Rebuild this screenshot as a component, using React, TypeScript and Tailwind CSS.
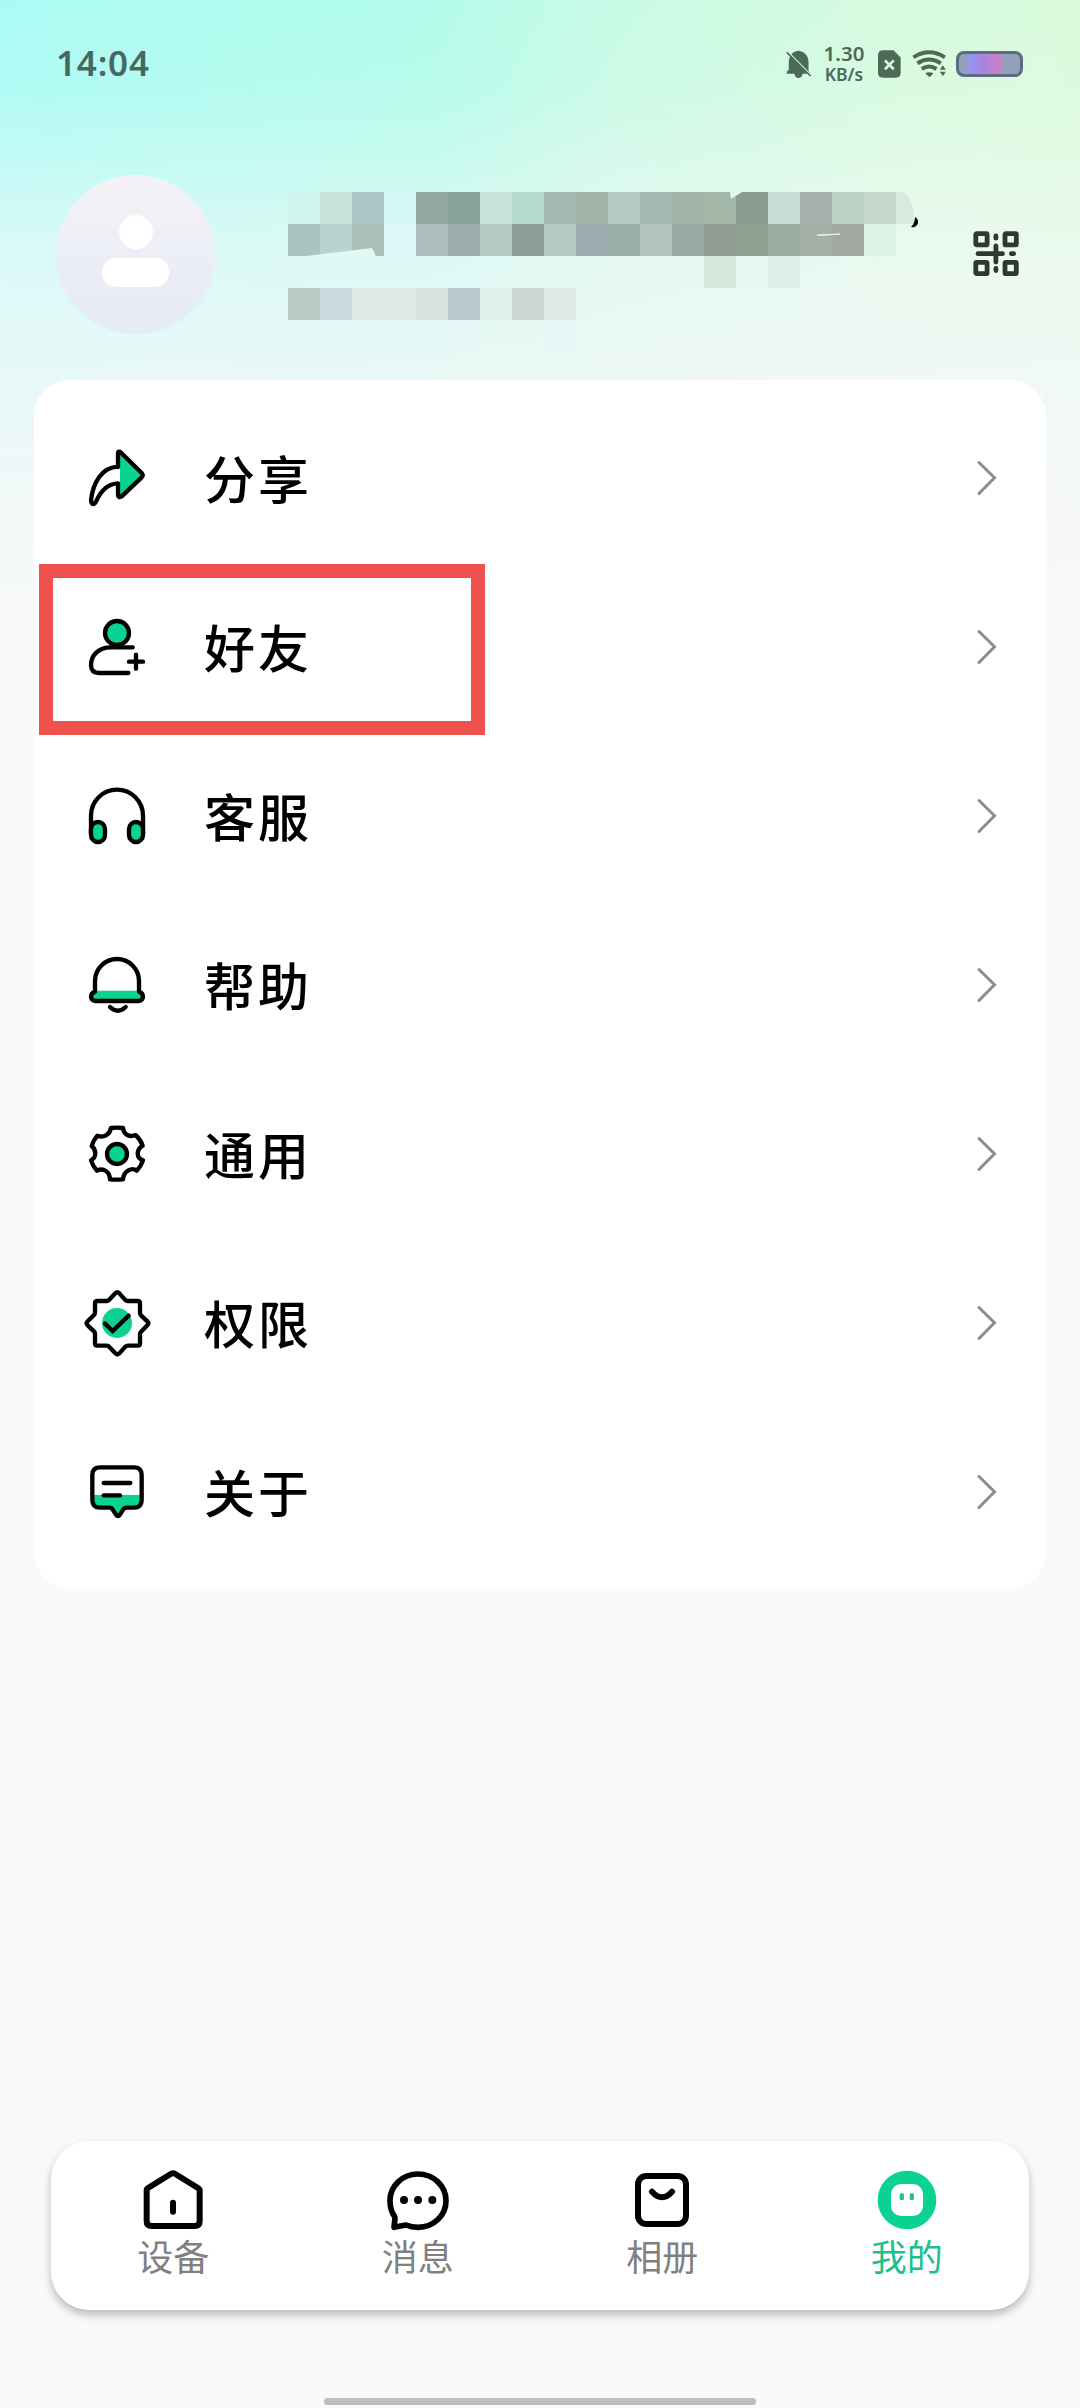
import type { ReactNode } from "react";

const GREEN = "#0ad293";

// Obscured name and account rows: one entry per 32px cell, "" is empty.
const MOSAIC: string[][] = [
  ["#cff5ed", "#c6e3dc", "#abc6c9", "#d3f8f6", "#92aaa3", "#8ba499", "#c6e3dc", "#b4dbcd", "#a4b8b4", "#a4b4a8", "#b4cbc5", "#a4b8b4", "#a4b4a8", "#a4b8aa", "#8a9d92", "#c6ded6", "#a4b0ac", "#bcd2c5", "#c6d8cc", ""],
  ["#abc4c1", "#b8d3cf", "#acc0ba", "#dcf7f6", "#adbdbb", "#9badac", "#b4cbc5", "#8a9d99", "#b4cbc5", "#9badae", "#9bb0aa", "#b4c3bb", "#9ba9a3", "#939c92", "#90a08f", "#9bada3", "#a4aea4", "#a3aaa1", "#ddf3e6", ""],
  ["", "", "", "", "", "", "", "", "", "", "", "", "", "#d5e8dd", "", "#ddeee6", "", "", "", ""],
  ["#b9c9c4", "#cbd8df", "#dde9e4", "#dde9e4", "#d6e2de", "#bac8cd", "#dff0ed", "#ccd5d3", "#dee9e5", "", "", "", "", "", "", "", "", "", "", ""],
  ["", "", "", "", "", "#e6f5f6", "", "", "#e6f5f6", "", "", "", "", "", "", "", "", "", "", ""],
];

function Icon({ box, size, w, children }: { box: string; size: number; w: number; children: ReactNode }) {
  return (
    <svg viewBox={box} width={size} height={size} fill="none" stroke="#000" strokeWidth={w} strokeLinecap="round" strokeLinejoin="round" className="shrink-0">
      {children}
    </svg>
  );
}

const ROWS: { label: string; marked?: boolean; icon: ReactNode }[] = [
  {
    label: "分享",
    icon: (
      <Icon box="153 213 216 216" size={72} w={13}>
        <path d="M270 245 L338 313 L270 377 Z" fill={GREEN} stroke="none" />
        <path d="M264 288 V247 Q264 239 271 243 L335 306 Q341 313 335 319 L275 376 Q264 382 264 371 V337 C232 338 211 362 198 392 Q193 401 186 398 Q183 396 183 388 C189 334 216 289 264 287" />
      </Icon>
    ),
  },
  {
    label: "好友",
    marked: true,
    icon: (
      <Icon box="153 720 216 216" size={72} w={13}>
        <circle cx="261" cy="786" r="36" fill={GREEN} />
        <path d="M308 829 H242 C205 829 183 854 183 882 Q183 906 207 906 H295 M297 872 H339 M318 851 V893" />
      </Icon>
    ),
  },
  {
    label: "客服",
    icon: (
      <Icon box="63 117 216 216" size={72} w={13}>
        <path d="M93 278 V224 A78 78 0 0 1 249 224 V278" />
        <rect x="93" y="243" width="42" height="60" rx="21" fill={GREEN} />
        <rect x="207" y="243" width="42" height="60" rx="21" fill={GREEN} />
      </Icon>
    ),
  },
  {
    label: "帮助",
    icon: (
      <Icon box="63 624 216 216" size={72} w={13}>
        <path d="M106 749 H236 L249 766 L240 780 H102 L93 766 Z" fill={GREEN} stroke="none" />
        <path d="M105 752 V720 A66 66 0 0 1 237 720 V752 Q249 756 249 768 Q247 780 235 780 H107 Q95 780 93 768 Q93 756 105 752 Z M150 798 Q173 820 197 798" />
      </Icon>
    ),
  },
  {
    label: "通用",
    icon: (
      <Icon box="63 111 216 216" size={72} w={13}>
        <path d="M153 141 Q171 139 189 141 C191 158 204 168 220 164 Q227 161 228 163 Q242 176 248 194 C228 207 228 231 249 238 Q243 256 230 269 C216 258 191 269 189 295 Q171 297 150 295 C149 270 129 260 111 269 Q99 256 93 238 C110 229 110 207 95 195 Q100 177 112 164 C130 171 149 162 153 141 Z" />
        <circle cx="171" cy="219" r="30" fill={GREEN} />
      </Icon>
    ),
  },
  {
    label: "权限",
    icon: (
      <Icon box="63 618 216 216" size={72} w={13}>
        <circle cx="171" cy="726" r="45" fill={GREEN} stroke="none" />
        <path d="M166 637 Q172 631 178 637 L197 658 Q199 660 203 660 H233 Q240 660 240 667 V695 Q240 700 243 703 L262 721 Q268 727 262 733 L243 752 Q240 755 240 760 V787 Q240 794 233 794 H204 Q199 794 196 797 L178 817 Q172 823 166 817 L148 798 Q145 794 140 794 H112 Q105 794 105 787 V758 Q105 754 102 751 L83 733 Q77 727 83 721 L102 702 Q105 699 105 694 V667 Q105 660 112 660 H140 Q144 660 147 657 Z" />
        <path d="M135 728 L158 750 L206 704" strokeLinejoin="miter" />
      </Icon>
    ),
  },
  {
    label: "关于",
    icon: (
      <Icon box="63 225 216 216" size={72} w={13}>
        <path d="M99 342 H245 V360 Q242 380 222 380 H192 L174 405 L154 382 H120 Q98 380 98 360 Z" fill={GREEN} stroke="none" />
        <path d="M120 259 H222 Q245 259 245 282 V357 Q245 380 222 380 H199 Q194 380 191 383 L180 401 Q174 409 168 401 L158 386 Q155 380 149 380 H120 Q97 380 97 357 V282 Q97 259 120 259 Z M131 306 H211 M131 343 H180" />
      </Icon>
    ),
  },
];

const TABS: { label: string; active?: boolean; icon: ReactNode }[] = [
  {
    label: "设备",
    icon: (
      <Icon box="330 141 198 198" size={66} w={18}>
        <path d="M350 211 Q350 207 354 204 L422 162 Q429 158 436 162 L504 204 Q509 207 509 211 V303 Q509 318 494 318 H365 Q350 318 350 303 Z M429 248 V275" />
      </Icon>
    ),
  },
  {
    label: "消息",
    icon: (
      <Icon box="1062 141 198 198" size={66} w={17}>
        <path d="M1091 290 C1081 276 1077 260 1077 242 C1077 198 1114 162 1161 162 C1208 162 1245 198 1245 242 C1245 286 1208 322 1161 322 Q1142 322 1125 315 L1089 322 L1092 295 Z" />
        <g fill="#000" stroke="none">
          <circle cx="1119" cy="240" r="12" />
          <circle cx="1161" cy="240" r="12" />
          <circle cx="1204" cy="240" r="12" />
        </g>
      </Icon>
    ),
  },
  {
    label: "相册",
    icon: (
      <Icon box="264 141 198 198" size={66} w={18}>
        <rect x="291" y="168" width="144" height="144" rx="25" />
        <path d="M333 215 Q363 248 393 215" />
      </Icon>
    ),
  },
  {
    label: "我的",
    active: true,
    icon: (
      <Icon box="999 141 198 198" size={66} w={0}>
        <g stroke="none">
          <circle cx="1098" cy="240" r="88" fill={GREEN} />
          <rect x="1050" y="192" width="96" height="96" rx="30" fill="#fff" />
          <rect x="1076" y="219" width="13" height="22" rx="6.5" fill="#25bf90" />
          <rect x="1106" y="219" width="13" height="22" rx="6.5" fill="#25bf90" />
        </g>
      </Icon>
    ),
  },
];

function StatusBar() {
  return (
    <header className="flex h-32 items-center pr-[57px] pl-[56px] font-['Noto_Sans'] text-[#46695f]">
      <span className="mb-[3px] text-[35px] leading-none font-semibold tracking-[0.8px]">14:04</span>
      <div className="ml-auto flex items-center text-[#4c6a54]">
        <svg viewBox="78 58 78 88" width="26" height="29" className="mr-[12px]">
          <path d="M115 60 C134 62 146 77 146 94 V122 L151 130 H128 C127 147 105 147 103 130 H80 V125 L86 117 V92 C88 74 98 62 115 60 Z" fill="currentColor" />
          <path d="M76 58 L158 140" stroke="#d3f9e4" strokeWidth="7" />
          <path d="M80 65 L152 137" stroke="currentColor" strokeWidth="5" />
        </svg>
        <div className="mr-[14px] mb-[2px] flex w-[40px] flex-col items-center font-semibold whitespace-nowrap">
          <span className="text-[20.5px] leading-[21px]">1.30</span>
          <span className="text-[17.5px] leading-[20px]">KB/s</span>
        </div>
        <svg viewBox="354 60 70 84" width="23" height="28" className="mr-[11px]">
          <path d="M370 60 H401 L423 82 V129 Q423 144 408 144 H369 Q354 144 354 129 V76 Q354 60 370 60 Z" fill="currentColor" />
          <path d="M375 91 L402 118 M402 91 L375 118" stroke="#d5f9e2" strokeWidth="8" />
        </svg>
        <svg viewBox="455 62 104 84" width="35" height="28" className="mr-[9px]" fill="none" stroke="currentColor" strokeWidth="12">
          <path d="M459 84 Q506 54 553 84 M471 102 Q506 79 541 102 M484 119 Q506 104 528 119" />
          <path d="M494 132 Q506 125 519 132 L507 144 Z M538 121 L547 108 L556 121 Z M538 127 H556 L547 141 Z" fill="currentColor" stroke="none" />
        </svg>
        <div className="flex h-[26px] w-[67px] rounded-[8px] border-[3px] border-[#5b6c82] bg-[#92a1b9] pl-[8px]">
          <div className="h-full w-[34px] bg-linear-to-r from-[#8e9af0] via-[#a983dc] to-[#d07fc4]" />
        </div>
      </div>
    </header>
  );
}

function Profile() {
  return (
    <section className="flex h-[252px] items-start pr-[61px] pl-[56px]">
      <div className="mt-[47px] flex size-[159px] flex-col items-center rounded-full bg-linear-to-b from-[#f4f2f6] to-[#e5eaf5] pt-[40px]">
        <div className="size-[34px] rounded-full bg-white" />
        <div className="mt-[9px] h-[29px] w-[67px] rounded-[14px] bg-white" />
      </div>
      <div className="relative mt-16 ml-[73px] grid grid-cols-[repeat(20,32px)] grid-rows-[repeat(5,32px)]">
        {MOSAIC.flat().map((c, i) => (
          <div key={i} style={{ backgroundColor: c || undefined }} />
        ))}
        <svg viewBox="288 192 640 160" width="640" height="160" className="absolute inset-0">
          <path d="M896 192 H904 Q914 200 914 224 H896 Z" fill="#d8e9df" />
          <path d="M915 217 C919 219 919 224 916 226 Q914 228 911 227 Q915 223 915 217 Z" fill="#000" />
          <path d="M306 256 L372 248 L376 256 Z" fill="#dff9f6" />
          <path d="M730 192 H742 L731 199 Z" fill="#e0f9ef" />
          <path d="M817 235 L840 234 L820 235.5 Z" fill="#eef8f0" stroke="#eef8f0" strokeWidth="0.8" />
        </svg>
      </div>
      <svg viewBox="0 0 46 46" width="46" height="46" fill="none" stroke="#2e382f" strokeWidth="4.8" strokeLinecap="round" className="mt-[103px] ml-auto">
        <rect x="2.8" y="2.6" width="11.3" height="11.3" rx="1" />
        <rect x="32" y="2.6" width="11.3" height="11.3" rx="1" />
        <rect x="2.8" y="31.4" width="11.3" height="11.3" rx="1" />
        <rect x="32" y="31.4" width="11.3" height="11.3" rx="1" />
        <path d="M5 22.7 H29.5 M22.9 15 V31 M22.9 5 V7.2 M22.9 37.4 V39.6 M38.4 22.7 H40.6" />
      </svg>
    </section>
  );
}

export default function App() {
  return (
    <div className="flex h-[2408px] w-[1080px] flex-col bg-[#f9f9f9] bg-[linear-gradient(180deg,rgba(248,248,248,0)_0px,rgba(246,248,249,0.08)_90px,rgba(246,248,249,0.28)_150px,rgba(245,248,249,0.62)_250px,rgba(245,248,249,0.8)_370px,rgba(247,248,249,0.92)_490px,#f9f9f9_650px),linear-gradient(90deg,#abfbf5_0%,#b3fbea_40%,#c8fae6_56%,#d8fbdf_85%,#dafbdc_100%)] font-['Noto_Sans_CJK_SC',sans-serif]">
      <StatusBar />
      <Profile />
      <main className="mx-[34px] flex h-[1209px] flex-col rounded-[36px] bg-white py-[13px]">
        {ROWS.map((row) => (
          <div key={row.label} className="relative flex h-[169px] items-center pr-[48px] pl-[47px]">
            {row.icon}
            <span className="ml-[51px] text-[51px] leading-none font-medium tracking-[3px] text-black">{row.label}</span>
            <svg viewBox="0 0 22 36" width="22" height="36" fill="none" stroke="#8c8c8c" strokeWidth="3" strokeLinecap="round" className="ml-auto">
              <path d="M3 2.5 L18.5 17.7 L3 33.5" />
            </svg>
            {row.marked && <div className="absolute top-[2px] left-[5px] h-[171px] w-[446px] border-[14px] border-[#ef524c]" />}
          </div>
        ))}
      </main>
      <nav className="mx-[51px] mt-auto grid h-[169px] grid-cols-4 rounded-[38px] bg-white pt-[26px] shadow-[0_5px_9px_rgba(0,0,0,0.25)]">
        {TABS.map((tab) => (
          <div key={tab.label} className="flex flex-col items-center">
            {tab.icon}
            <span className={tab.active ? "mt-[4px] text-[36px] leading-[36px] text-[#1cc08c]" : "mt-[4px] text-[36px] leading-[36px] text-[#808080]"}>{tab.label}</span>
          </div>
        ))}
      </nav>
      <div className="mx-auto mt-[88px] mb-[3px] h-[7px] w-[432px] shrink-0 rounded-full bg-[#bebebe]" />
    </div>
  );
}
